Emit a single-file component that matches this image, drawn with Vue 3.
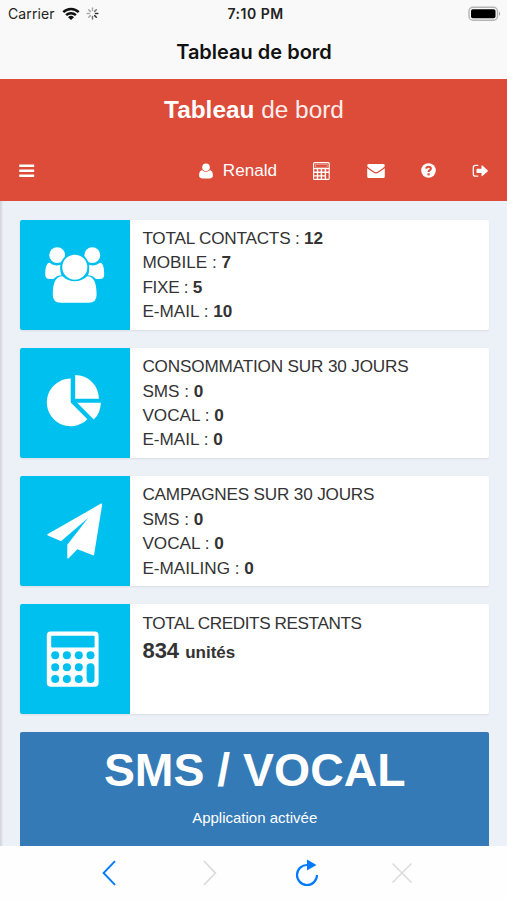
<script setup>
const cartes = [
  {
    icone: 'contacts',
    lignes: [
      { label: 'TOTAL CONTACTS : ', valeur: '12', espace: -0.2 },
      { label: 'MOBILE : ', valeur: '7' },
      { label: 'FIXE : ', valeur: '5', espace: -0.3 },
      { label: 'E-MAIL : ', valeur: '10' }
    ]
  },
  {
    icone: 'camembert',
    lignes: [
      { label: 'CONSOMMATION SUR 30 JOURS', espace: -0.16 },
      { label: 'SMS : ', valeur: '0' },
      { label: 'VOCAL : ', valeur: '0' },
      { label: 'E-MAIL : ', valeur: '0' }
    ]
  },
  {
    icone: 'avion',
    lignes: [
      { label: 'CAMPAGNES SUR 30 JOURS', espace: -0.18 },
      { label: 'SMS : ', valeur: '0' },
      { label: 'VOCAL : ', valeur: '0' },
      { label: 'E-MAILING : ', valeur: '0' }
    ]
  },
  {
    icone: 'calculatrice',
    lignes: [{ label: 'TOTAL CREDITS RESTANTS', espace: -0.4 }],
    credits: '834'
  }
];

// Touches de la calculatrice, la dernière colonne se termine par une touche haute
const touches = [];
for (const y of [51.3, 63.2, 75]) {
  for (const x of [35.2, 46.9, 58.8, 70.5]) {
    if (x < 70 || y < 52) touches.push({ x, y });
  }
}
</script>

<template>
  <div class="phone">
    <div class="status">
      <div class="status-left">
        <span class="carrier">Carrier</span>
        <svg class="wifi" width="18" height="14" viewBox="0 0 18 14" fill="none" stroke="#111" stroke-width="2.5">
          <path d="M1.3 5.1a11 11 0 0 1 15.4 0M4.1 8.2a7 7 0 0 1 9.8 0" />
          <path d="M9 13 6 10.2a4.3 4.3 0 0 1 6 0z" fill="#111" stroke="none" />
        </svg>
        <svg class="spinner" width="13" height="13" viewBox="-6.5 -6.5 13 13" stroke-width="1.5" stroke-linecap="round">
          <line v-for="n in 8" :key="n" x1="0" y1="-3" x2="0" y2="-5.4" :transform="`rotate(${n * 45})`" :stroke="n === 2 || n === 3 ? '#333' : n === 1 || n === 4 ? '#777' : '#aaa'" />
        </svg>
      </div>
      <span class="clock">7:10 PM</span>
      <svg class="battery" width="33" height="16" viewBox="0 0 33 16">
        <rect x="1" y="1.2" width="28.5" height="13" rx="4" fill="#f9f9f9" stroke="#b5b5b5" stroke-width="1.4" />
        <rect x="3" y="3.2" width="24.5" height="9" rx="1.8" fill="#000" />
        <path d="M31 5.5q2 2.2 0 4.4z" fill="#999" />
      </svg>
    </div>
    <div class="title">Tableau de bord</div>

    <header class="header">
      <div class="logo"><b>Tableau</b> <span>de bord</span></div>
      <nav class="nav">
        <svg width="16" height="14" viewBox="0 0 16 14" fill="#fff">
          <rect x=".2" y=".6" width="15" height="2.5" rx=".5" />
          <rect x=".2" y="5.6" width="15" height="2.5" rx=".5" />
          <rect x=".2" y="10.6" width="15" height="2.5" rx=".5" />
        </svg>
        <div class="nav-right">
          <div class="user">
            <svg width="14" height="16" viewBox="0 0 14 16" fill="#fff">
              <circle cx="7" cy="4.2" r="3.8" />
              <path d="M3.3 7.200C1 7.200.1 9.700.1 12.600.1 14.300 1.200 15.400 2.900 15.400h8.200c1.700 0 2.800-1.100 2.800-2.800 0-2.900-.9-5.400-3.200-5.400a5.600 5.600 0 0 1-7.400 0z" />
            </svg>
            <span>Renald</span>
          </div>
          <svg class="i-calc" width="17" height="18" viewBox="0 0 17 18">
            <rect x=".6" y=".6" width="15.6" height="16.8" rx="1" fill="none" stroke="#fff" stroke-width="1.1" />
            <path d="M2.5 2.4h11.8v2.9H2.5z" fill="none" stroke="#fff" stroke-opacity=".6" stroke-width=".7" />
            <path d="M.6 6.6h15.6M.6 10.3h15.6M.6 13.9h12M4.5 6.6v10.8M8.4 6.6v10.8M12.4 6.6v10.8" stroke="#fff" stroke-width="1.4" />
          </svg>
          <svg class="i-mail" width="18" height="14" viewBox="0 0 18 14" fill="#fff">
            <path d="M1.5 0h15Q17.800 0 17.800 1.500 17.800 2.700 16 4L11 7.500Q9 9 7 7.500L2 4Q.2 2.700.2 1.500.2 0 1.500 0z" />
            <path d="M.2 4.300 6.300 8.600Q9 10.600 11.700 8.600L17.800 4.300V12.400Q17.800 13.900 16.300 13.900H1.700Q.2 13.900.2 12.400z" />
          </svg>
          <svg class="i-help" width="15" height="15" viewBox="0 0 15 15">
            <circle cx="7.5" cy="7.5" r="7.3" fill="#fff" />
            <path d="M5.100 5.700C5.500 3.300 9.800 3.200 9.900 5.600 9.900 7.200 7.600 7 7.600 9.100" fill="none" stroke="#dd4b39" stroke-width="2" />
            <rect x="6.5" y="10.3" width="2.2" height="2.1" fill="#dd4b39" />
          </svg>
          <svg class="i-out" width="17" height="14" viewBox="0 0 17 14">
            <path d="M6.300 1.400H3.500Q1.300 1.400 1.300 3.600V9.900Q1.300 12.100 3.500 12.100H6.300" fill="none" stroke="#fff" stroke-width="1.3" />
            <path d="M5.200 4.700H9.500V2Q9.500.9 10.400 1.600L15.600 6.200Q16.200 6.800 15.600 7.400L10.400 12Q9.500 12.700 9.500 11.600V9.100H5.200Q4.500 9.100 4.500 8.400V5.400Q4.500 4.700 5.200 4.700z" fill="#fff" />
          </svg>
        </div>
      </nav>
    </header>

    <main class="content">
      <section v-for="carte in cartes" :key="carte.icone" class="info-box">
        <div class="tile">
          <svg viewBox="0 0 110 110" fill="#fff">
            <g v-if="carte.icone === 'contacts'">
              <circle cx="37.2" cy="35.2" r="7.9" />
              <circle cx="72.3" cy="35.2" r="7.9" />
              <path d="M29.500 42.800C26.300 43.200 25.300 48 25.300 54.500Q25.300 59 29.800 59H33.500Q36.500 55.500 41.500 55.300 39.800 52 40.700 44.700 34.500 46.800 29.500 42.800z" />
              <path d="M80 42.800C83.200 43.200 84.200 48 84.200 54.500Q84.200 59 79.700 59H76Q73 55.500 68 55.300 69.700 52 68.800 44.700 75 46.800 80 42.800z" />
              <circle cx="54.8" cy="47.2" r="13.5" stroke="#00c0ef" stroke-width="2" />
              <path d="M42.500 56.200C35.300 56.200 32.800 63.500 32.800 75Q32.800 82.700 40.800 82.700H68.600Q76.600 82.700 76.600 75C76.600 63.500 74.200 56.200 67.100 56.200 60.400 62.800 49.200 62.800 42.500 56.200z" />
            </g>
            <g v-else-if="carte.icone === 'camembert'">
              <path d="M50.700 30.600V54.500L67.400 71.300A23.800 23.800 0 1 1 50.700 30.600z" />
              <path d="M55.200 27A23.700 23.700 0 0 1 78.900 50.700H55.200z" />
              <path d="M57.200 54.700H80.800A23.700 23.700 0 0 1 73.800 71.500z" />
            </g>
            <g v-else-if="carte.icone === 'avion'" stroke="#fff" stroke-width="1.6" stroke-linejoin="round">
              <path d="M81.400 28.300 28.200 58.800 41 64.200 74 35.800 48.100 68.900V81.800L57.200 72.200 73.300 78.600z" />
            </g>
            <g v-else>
              <rect x="26.8" y="27.6" width="51.8" height="55.2" rx="4" />
              <rect x="31.2" y="31.8" width="43.4" height="11.6" rx="1" fill="#00c0ef" />
              <circle v-for="t in touches" :key="`${t.x}-${t.y}`" :cx="t.x" :cy="t.y" r="4" fill="#00c0ef" />
              <rect x="66.6" y="59.3" width="7.9" height="19.6" rx="3.9" fill="#00c0ef" />
            </g>
          </svg>
        </div>
        <div class="info">
          <p v-for="ligne in carte.lignes" :key="ligne.label" :style="{ letterSpacing: (ligne.espace || 0) + 'px' }">{{ ligne.label }}<b v-if="ligne.valeur">{{ ligne.valeur }}</b></p>
          <p v-if="carte.credits" class="credits">{{ carte.credits }} <small>unités</small></p>
        </div>
      </section>

      <section class="app-box">
        <h2>SMS / VOCAL</h2>
        <p>Application activée</p>
      </section>
    </main>

    <footer class="toolbar">
      <svg width="14" height="26" viewBox="0 0 14 26" fill="none" stroke="#007aff" stroke-width="1.9">
        <path d="M13 1.2 1.6 13 13 24.8" />
      </svg>
      <svg class="t-next" width="14" height="26" viewBox="0 0 14 26" fill="none" stroke="#dcdcdc" stroke-width="1.7">
        <path d="M1 1.2 12.4 13 1 24.8" />
      </svg>
      <svg class="t-reload" width="24" height="28" viewBox="0 0 24 28">
        <path d="M12.5 6A10 10 0 1 0 22 16" fill="none" stroke="#007aff" stroke-width="2.2" />
        <path d="M12 .5 21.5 6 12 11.500z" fill="#007aff" />
      </svg>
      <svg class="t-stop" width="22" height="22" viewBox="0 0 22 22" fill="none" stroke="#dcdcdc" stroke-width="1.6">
        <path d="M1.5 1.5 20.500 20.500M20.500 1.500 1.500 20.500" />
      </svg>
    </footer>
  </div>
</template>

<style>
body { margin: 0; overflow: hidden; }
</style>

<style scoped>
.phone { width: 507px; height: 900px; display: flex; flex-direction: column; overflow: hidden; background: #f9f9f9; font-family: "Liberation Sans", Arial, sans-serif; color: #333; }
p, h2 { margin: 0; }
svg { display: block; flex: none; }

/* Barre d'état */
.status { height: 27px; flex: none; display: grid; grid-template-columns: 1fr auto 1fr; align-items: center; padding: 0 6px 0 8px; font-family: Inter, sans-serif; font-size: 14px; color: #222; }
.status-left { display: flex; align-items: center; }
.carrier { letter-spacing: 0.1px; }
.wifi { margin-left: 7px; }
.spinner { margin-left: 6px; }
.clock { padding-left: 2px; font-weight: 600; font-size: 14px; letter-spacing: 0.5px; }
.battery { justify-self: end; }
.title { height: 52px; flex: none; line-height: 50px; padding-left: 1px; text-align: center; font-family: Inter, sans-serif; font-size: 20px; font-weight: 600; color: #111; }

/* En-tête */
.header { height: 122px; flex: none; background: #dd4b39; color: #fff; }
.logo { height: 61px; line-height: 62px; padding-left: 1px; text-align: center; font-size: 24.4px; }
.logo span { color: #fdeeec; }
.nav { height: 61px; display: flex; align-items: center; justify-content: space-between; padding: 0 18px 0 19px; }
.nav-right { display: flex; align-items: center; }
.user { display: flex; align-items: center; gap: 10px; font-size: 17.1px; }
.i-calc { margin-left: 36px; }
.i-mail { margin-left: 37px; }
.i-help { margin-left: 36px; }
.i-out { margin-left: 36px; }

/* Cartes */
.content { flex: 1; min-height: 0; overflow: hidden; display: flex; flex-direction: column; gap: 18.2px; padding: 18.5px 18px 0 20.4px; background: linear-gradient(90deg, #d0d3da 0, #dfe2e9 2px, #ecf0f7 3px); }
.info-box { height: 110px; flex: none; display: flex; background: #fff; border-radius: 2px; box-shadow: 0 1px 2px rgba(0, 0, 0, 0.08); }
.tile { width: 110px; flex: none; background: #00c0ef; border-radius: 2px 0 0 2px; }
.info { padding: 6.5px 12px; font-size: 17.15px; line-height: 24.4px; white-space: nowrap; }
.credits { padding-top: 4px; font-size: 22px; font-weight: bold; }
.credits small { font-size: 17px; }

.app-box { height: 160px; flex: none; background: #337ab7; border-radius: 2px; color: #fff; text-align: center; }
.app-box h2 { font-size: 46.4px; line-height: 52px; padding-top: 12px; }
.app-box p { font-size: 15px; line-height: 20px; padding-top: 12px; }

/* Barre de navigation du bas */
.toolbar { height: 54px; flex: none; display: flex; align-items: center; padding-left: 102px; background: #fefefe; }
.t-next { margin-left: 87px; }
.t-reload { margin-left: 78px; }
.t-stop { margin-left: 72px; }
</style>
